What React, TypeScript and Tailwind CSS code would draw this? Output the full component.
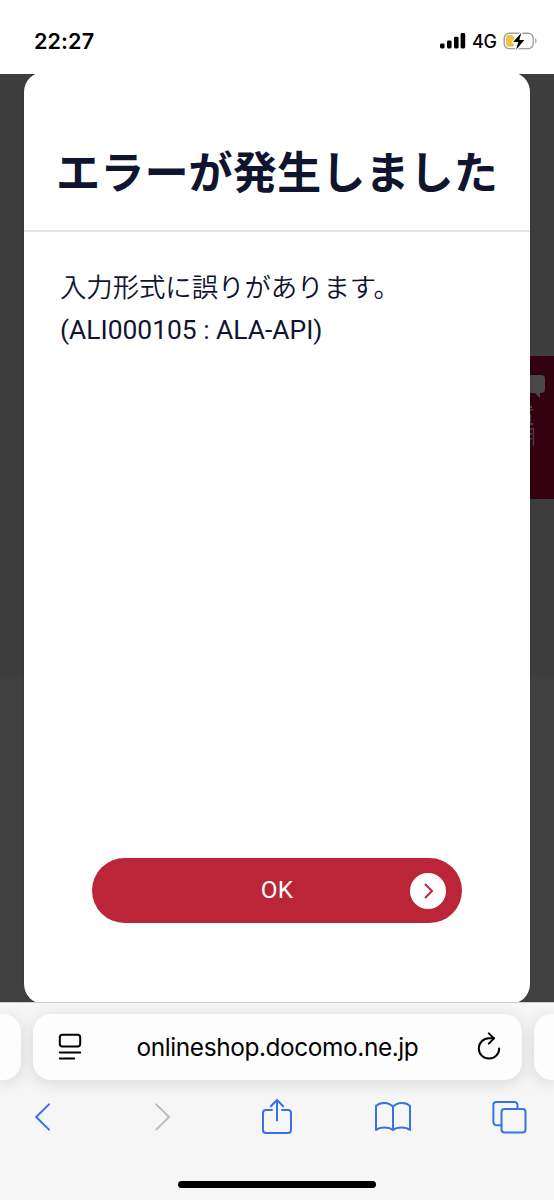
import type { ReactNode } from 'react'

function StatusBar() {
  return (
    <header className="flex h-[74px] shrink-0 items-start justify-between bg-white pt-[27px] pr-[15px] pl-[34px] text-black">
      <span className="font-[Inter,sans-serif] text-[21.6px] leading-[28px] font-semibold tracking-[0.1px]">
        22:27
      </span>
      <div className="flex h-[28px] items-center">
        <svg width="26" height="18" viewBox="0 0 26 18" fill="currentColor">
          <rect x="0" y="11.5" width="4.6" height="5" rx="1.4" />
          <rect x="7" y="8.5" width="4.6" height="8" rx="1.4" />
          <rect x="14" y="4.7" width="4.6" height="11.8" rx="1.4" />
          <rect x="20.6" y="1" width="4.6" height="15.5" rx="1.4" />
        </svg>
        <span className="mt-[2px] ml-[6px] w-[25px] font-[Inter,sans-serif] text-[18px] leading-[28px] font-medium tracking-[-0.4px]">
          4G
        </span>
        <svg className="ml-[6px]" width="36" height="20" viewBox="0 0 36 20">
          <rect x="1.2" y="2.2" width="29" height="15.4" rx="5" fill="none" stroke="#a0a0a4" strokeWidth="1.4" />
          <path d="M32.2 7.2c1.8.6 1.8 4.6 0 5.2z" fill="#a0a0a4" />
          <rect x="3" y="4" width="8" height="11.8" rx="2.8" fill="#f0c341" />
          <path
            d="M18.3 1.8 10.2 11h5l-2.1 7.8L21.4 9h-5z"
            fill="#000"
            stroke="#fff"
            strokeWidth="2.4"
            paintOrder="stroke"
            strokeLinejoin="round"
          />
        </svg>
      </div>
    </header>
  )
}

// Chat tab of the shop page, dimmed by the overlay
function ChatTab() {
  return (
    <div className="absolute top-[282px] right-0 h-[143px] w-[24px] overflow-hidden bg-[#32000f]">
      <svg width="24" height="143" viewBox="0 0 24 143" fill="#4b4649">
        <path d="M0 19h11a4 4 0 0 1 4 4v10a4 4 0 0 1-4 4h-1v5l-5-5H0z" />
        <path d="M0 50h2v2H0zM0 53h3v1.6H0zM0 58h1v8H0zM0 67h3v2H0zM0 72h4v18H2.8V73.4H0zM0 77h2v1.4H0zM0 82h2v1.4H0z" />
      </svg>
    </div>
  )
}

function ErrorDialog() {
  return (
    <div className="relative mx-[24px] -mt-[2px] flex h-[932px] flex-col rounded-[20px] bg-white text-[#10142f] shadow-[0_0_1px_#222]">
      <h1 className="flex h-[160px] items-start justify-center border-b-2 border-[#e6e6e6] pt-[68px] font-['Noto_Sans_CJK_JP',sans-serif] text-[44.2px] leading-[60px] font-bold whitespace-nowrap">
        エラーが発生しました
      </h1>
      <div className="pt-[32px] pl-[36px] text-[26.4px]">
        <p className="font-['Noto_Sans_CJK_JP',sans-serif] leading-[43px] font-[350] tracking-[-0.05px] whitespace-nowrap">
          入力形式に誤りがあります。
        </p>
        <p className="font-[Roboto,sans-serif] leading-[47px] whitespace-nowrap">(ALI000105 : ALA-API)</p>
      </div>
      <button className="mx-auto mt-auto mb-[81px] grid h-[65px] w-[370px] grid-cols-[1fr_auto_1fr] items-center rounded-full bg-[#ba2637] pr-[16px] pl-[16px] text-white">
        <span />
        <span className="-mt-[2px] font-[Roboto,sans-serif] text-[24.4px] leading-[30px] tracking-[0.3px]">OK</span>
        <span className="flex h-[36px] w-[36px] items-center justify-center justify-self-end rounded-full bg-white">
          <svg width="36" height="36" viewBox="0 0 36 36" fill="none" stroke="#ba2637" strokeWidth="2">
            <path d="m15.5 11.5 6.5 6.5-6.5 6.5" strokeLinecap="round" />
          </svg>
        </span>
      </button>
    </div>
  )
}

function AddressBar() {
  return (
    <div className="flex h-[66px] justify-between">
      <div className="w-[21px] rounded-r-[18px] bg-[#fdfdfd] shadow-[0_3px_16px_rgba(0,0,0,0.13)]" />
      <div className="flex w-[489px] items-center justify-between rounded-[18px] bg-[#fdfdfd] pr-[20px] pl-[25px] shadow-[0_3px_16px_rgba(0,0,0,0.13)]">
        <svg width="24" height="30" viewBox="0 0 24 30" fill="none" stroke="#000" strokeWidth="2" strokeLinecap="round">
          <rect x="1.8" y="2.8" width="20.4" height="11.6" rx="2.6" />
          <path d="M1.8 20.4h20.4M1.8 26.6h14.4" />
        </svg>
        <span className="mr-[3px] font-[Inter,sans-serif] text-[24.4px] leading-[30px] tracking-[-0.4px] whitespace-nowrap text-black">
          onlineshop.docomo.ne.jp
        </span>
        <svg
          width="26"
          height="30"
          viewBox="0 0 26 30"
          fill="none"
          stroke="#000"
          strokeWidth="2"
          strokeLinecap="round"
          strokeLinejoin="round"
        >
          <path d="M18 6.2H13A10.2 10.2 0 1 0 23.2 16.4" />
          <path d="M12.8 1.4 18 6.4l-5.2 5.2" />
        </svg>
      </div>
      <div className="w-[20px] rounded-l-[18px] bg-[#fdfdfd] shadow-[0_3px_16px_rgba(0,0,0,0.13)]" />
    </div>
  )
}

function ToolIcon({ className, children }: { className: string; children: ReactNode }) {
  return (
    <svg
      className={className}
      width="36"
      height="38"
      viewBox="0 0 36 38"
      fill="none"
      stroke="currentColor"
      strokeWidth="2"
      strokeLinecap="round"
      strokeLinejoin="round"
    >
      {children}
    </svg>
  )
}

function BrowserBar() {
  return (
    <footer className="flex h-[198px] shrink-0 flex-col overflow-hidden border-t border-[#cfcfcf] bg-[#f6f6f6] pt-[11px]">
      <AddressBar />
      <nav className="mt-[18px] flex justify-between pr-[27px] pl-[25px]">
        <ToolIcon className="text-[#3673e4]">
          <path d="M24 6.4 11.2 19 24 31.6" />
        </ToolIcon>
        <ToolIcon className="text-[#bcbcbc]">
          <path d="M14.2 6.4 27 19 14.2 31.6" />
        </ToolIcon>
        <ToolIcon className="text-[#3673e4]">
          <path d="M14 12H8a3 3 0 0 0-3 3V32a3 3 0 0 0 3 3h22a3 3 0 0 0 3-3V15a3 3 0 0 0-3-3h-6M19 22.5V2.5M12.8 8.3 19 2l6.2 6.3" />
        </ToolIcon>
        <ToolIcon className="text-[#3673e4]">
          <path d="M18 9C14 3.8 5 3.8 1 8v24c4-3.5 13-3.5 17 0 4-3.5 13-3.5 17 0V8C31 3.8 22 3.8 18 9zM18 9v23" />
        </ToolIcon>
        <ToolIcon className="text-[#3673e4]">
          <rect x="10.5" y="11" width="24" height="23.5" rx="3" />
          <path d="M10.5 27.2H5.4a3 3 0 0 1-3-3V7a3 3 0 0 1 3-3H23.5a3 3 0 0 1 3 3v4" />
        </ToolIcon>
      </nav>
      <div className="mx-auto mt-auto mb-[12px] h-[7px] w-[198px] rounded-full bg-black" />
    </footer>
  )
}

export default function App() {
  return (
    <div className="flex h-[1200px] w-[554px] flex-col overflow-hidden bg-white">
      <StatusBar />
      <main className="relative h-[928px] shrink-0 overflow-hidden bg-[linear-gradient(#3d3d3d_603px,#404040_603px)]">
        <ChatTab />
        <ErrorDialog />
      </main>
      <BrowserBar />
    </div>
  )
}
